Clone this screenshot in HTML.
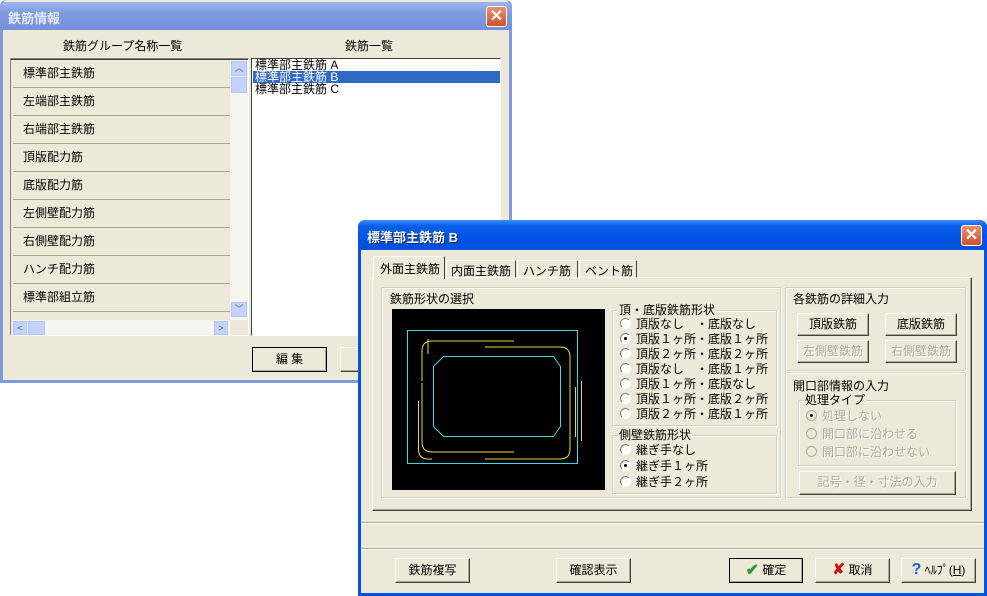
<!DOCTYPE html>
<html><head><meta charset="utf-8"><style>
*{box-sizing:border-box;margin:0;padding:0}
body{width:987px;height:596px;background:#fff;position:relative;overflow:hidden;font-family:"Liberation Sans","Noto Sans CJK JP",sans-serif;font-size:12px;color:#000}
.a{position:absolute}
.win{background:#ECE9D8}
.t1{background:linear-gradient(#9DB3EC,#7F9BE0 40%,#7590DA);}
.t2{background:linear-gradient(#3A8CFF,#0A5FE8 20%,#0054E3 60%,#0050D8);}
.tt{color:#fff;font-weight:bold;font-size:13px;white-space:nowrap}
.x{width:21px;height:21px;border:1px solid #fff;border-radius:3px;background:linear-gradient(#E88F72,#D2502C);color:#fff;font-weight:bold;font-size:16px;line-height:19px;text-align:center}
.row{position:absolute;left:2px;width:217px;height:28px;border-bottom:1px solid #A8A590;background:#ECE9D8;padding-left:10px;line-height:27px;font-size:12px}
.btn{position:absolute;background:#ECE9D8;border:1px solid;border-color:#fff #404040 #404040 #fff;box-shadow:inset -1px -1px #ACA899;text-align:center;white-space:nowrap}
.dis{color:#ACA899;text-shadow:1px 1px #fff}
.grp{position:absolute;border:1px solid #D0D0BF;box-shadow:1px 1px #fff inset,1px 1px #fff}
.gl{position:absolute;background:#ECE9D8;padding:0 1px;top:-8px;left:6px;line-height:14px}
.rd{position:absolute;white-space:nowrap;line-height:15px}
.rd i{display:inline-block;width:11px;height:11px;border-radius:50%;border:1px solid;border-color:#808080 #fff #fff #808080;background:#fff;vertical-align:-1px;margin-right:5px;position:relative}
.rd i.on:after{content:"";position:absolute;left:3px;top:3px;width:3px;height:3px;background:#000;border-radius:50%}
.rd.dis i{background:#ECE9D8}
</style></head><body>
<!-- background lines top -->
<div class="a" style="left:140px;top:0;width:1px;height:3px;background:#555"></div>
<div class="a" style="left:158px;top:0;width:1px;height:3px;background:#555"></div>
<div class="a" style="left:174px;top:0;width:1px;height:3px;background:#555"></div>
<div class="a" style="left:340px;top:0;width:1px;height:3px;background:#555"></div>
<div class="a" style="left:358px;top:0;width:1px;height:3px;background:#555"></div>
<div class="a" style="left:375px;top:0;width:1px;height:3px;background:#555"></div>

<!-- window 1 -->
<div class="a win" style="left:0;top:0;width:512px;height:383px;border:3px solid #7F9BE0;border-top:0;border-radius:6px 6px 0 0">
</div>
<div class="a t1" style="left:0;top:2px;width:512px;height:28px;border-radius:6px 6px 0 0"></div>
<div class="a tt" style="left:8px;top:8px;color:#E6ECFA">鉄筋情報</div>
<div class="a x" style="left:486px;top:6px;">✕</div>
<div class="a" style="left:63px;top:37px">鉄筋グループ名称一覧</div>
<div class="a" style="left:345px;top:37px">鉄筋一覧</div>
<div class="a" style="left:10px;top:58px;width:239px;height:278px;border:1px solid;border-color:#808080 #fff #fff #808080;background:#ECE9D8;overflow:hidden">
 <div style="position:absolute;left:0;top:0;width:237px;height:1px;background:#404040"></div>
 <div class="row" style="top:1px">標準部主鉄筋</div>
 <div class="row" style="top:29px">左端部主鉄筋</div>
 <div class="row" style="top:57px">右端部主鉄筋</div>
 <div class="row" style="top:85px">頂版配力筋</div>
 <div class="row" style="top:113px">底版配力筋</div>
 <div class="row" style="top:141px">左側壁配力筋</div>
 <div class="row" style="top:169px">右側壁配力筋</div>
 <div class="row" style="top:197px">ハンチ配力筋</div>
 <div class="row" style="top:225px">標準部組立筋</div>
 <div style="position:absolute;left:219px;top:1px;width:18px;height:260px;background:#F5F4EE"></div>
 <div style="position:absolute;left:220px;top:2px;width:16px;height:15px;background:#C3D3FD;border:1px solid #B0C4F8;color:#4D6185;font-size:9px;text-align:center;line-height:13px">︿</div>
 <div style="position:absolute;left:220px;top:18px;width:16px;height:16px;background:#C3D3FD;border:1px solid #B0C4F8"></div>
 <div style="position:absolute;left:220px;top:243px;width:16px;height:15px;background:#C3D3FD;border:1px solid #B0C4F8;color:#4D6185;font-size:9px;text-align:center;line-height:13px">﹀</div>
 <div style="position:absolute;left:1px;top:261px;width:218px;height:15px;background:#F5F4EE"></div>
 <div style="position:absolute;left:2px;top:262px;width:14px;height:14px;background:#C3D3FD;border:1px solid #B0C4F8;font-size:9px;line-height:12px;color:#4D6185;text-align:center">&lt;</div>
 <div style="position:absolute;left:17px;top:262px;width:17px;height:14px;background:#C3D3FD;border:1px solid #B0C4F8"></div>
 <div style="position:absolute;left:203px;top:262px;width:14px;height:14px;background:#C3D3FD;border:1px solid #B0C4F8;font-size:9px;line-height:12px;color:#4D6185;text-align:center">&gt;</div>
</div>
<div class="a" style="left:251px;top:58px;width:250px;height:278px;border:1px solid;border-color:#404040 #fff #fff #404040;background:#fff;font-family:'Liberation Sans','Noto Sans CJK JP',sans-serif;line-height:12px">
 <div style="position:absolute;left:3px;top:0">標準部主鉄筋 A</div>
 <div style="position:absolute;left:1px;top:12px;width:247px;height:12px;background:#316AC5;color:#fff;padding-left:2px">標準部主鉄筋 B</div>
 <div style="position:absolute;left:3px;top:24px">標準部主鉄筋 C</div>
</div>
<div class="btn" style="left:252px;top:347px;width:75px;height:25px;border:1px solid #000;line-height:22px">編 集</div>
<div class="btn" style="left:340px;top:347px;width:30px;height:25px"></div>

<!-- window 2 -->
<div class="a win" style="left:358px;top:220px;width:629px;height:376px;border:3px solid #0054E3;border-top:0;border-radius:7px 7px 0 0"></div>
<div class="a t2" style="left:358px;top:220px;width:629px;height:30px;border-radius:7px 7px 0 0"></div>
<div class="a tt" style="left:367px;top:227px;text-shadow:1px 1px #0A246A">標準部主鉄筋 B</div>
<div class="a x" style="left:961px;top:225px;">✕</div>

<!-- tabs -->
<div class="a" style="left:372px;top:277px;width:600px;height:234px;border:1px solid;border-color:#fff #404040 #404040 #fff;box-shadow:inset -1px -1px #ACA899"></div>
<div class="a" style="left:373px;top:256px;width:72px;height:23px;background:#ECE9D8;border:1px solid;border-color:#fff #404040 transparent #fff;border-bottom:0;padding:3px 0 0 6px">外面主鉄筋</div>
<div class="a" style="left:446px;top:260px;width:70px;height:18px;border:1px solid;border-color:#fff #404040 transparent #fff;padding:1px 0 0 4px">内面主鉄筋</div>
<div class="a" style="left:517px;top:260px;width:61px;height:18px;border:1px solid;border-color:#fff #404040 transparent #fff;padding:1px 0 0 5px">ハンチ筋</div>
<div class="a" style="left:579px;top:260px;width:58px;height:18px;border:1px solid;border-color:#fff #404040 transparent #fff;padding:1px 0 0 5px">ベント筋</div>

<div class="grp" style="left:381px;top:287px;width:400px;height:211px"></div>
<div class="a" style="left:390px;top:290px">鉄筋形状の選択</div>
<div class="a" style="left:392px;top:309px;width:213px;height:181px;background:#000">
<svg width="213" height="181" viewBox="0 0 213 181">
 <g fill="none" stroke="#3FD8E0" stroke-width="1">
  <rect x="15.5" y="21.5" width="170" height="133"/>
  <path d="M51.5 47.5 L161.5 47.5 L168.5 57.5 L168.5 117.5 L161.5 127.5 L51.5 127.5 L41.5 117.5 L41.5 57.5 Z"/>
 </g>
 <g fill="none" stroke="#E8D84A" stroke-width="1">
  <path d="M122 32 L40 32 Q30 32 30 42 L30 72"/>
  <path d="M93 38 L168 38 Q178 38 178 48 L178 140 Q178 150 168 150 L93 150"/>
  <path d="M122 143 L40 143 Q30 143 30 133 L30 74"/>
  <path d="M36 45 L36 30"/>
  <path d="M26.5 92 L26.5 140 Q26.5 150 36 150 L40 150"/>
  <path d="M189.5 72 L189.5 132"/>
  <path d="M183.5 78 L183.5 128"/>
 </g>
</svg>
</div>
<div class="grp" style="left:612px;top:310px;width:165px;height:116px"><span class="gl" style="left:5px">頂・底版鉄筋形状</span></div>
<div class="rd" style="left:620px;top:317px"><i></i>頂版なし　・底版なし</div>
<div class="rd" style="left:620px;top:332px"><i class="on"></i>頂版１ヶ所・底版１ヶ所</div>
<div class="rd" style="left:620px;top:347px"><i></i>頂版２ヶ所・底版２ヶ所</div>
<div class="rd" style="left:620px;top:362px"><i></i>頂版なし　・底版１ヶ所</div>
<div class="rd" style="left:620px;top:377px"><i></i>頂版１ヶ所・底版なし</div>
<div class="rd" style="left:620px;top:392px"><i></i>頂版１ヶ所・底版２ヶ所</div>
<div class="rd" style="left:620px;top:407px"><i></i>頂版２ヶ所・底版１ヶ所</div>
<div class="grp" style="left:612px;top:435px;width:165px;height:59px"><span class="gl" style="left:5px">側壁鉄筋形状</span></div>
<div class="rd" style="left:620px;top:443px"><i></i>継ぎ手なし</div>
<div class="rd" style="left:620px;top:459px"><i class="on"></i>継ぎ手１ヶ所</div>
<div class="rd" style="left:620px;top:475px"><i></i>継ぎ手２ヶ所</div>

<div class="grp" style="left:785px;top:287px;width:181px;height:84px"></div>
<div class="a" style="left:793px;top:290px">各鉄筋の詳細入力</div>
<div class="btn" style="left:797px;top:313px;width:72px;height:23px;line-height:20px">頂版鉄筋</div>
<div class="btn" style="left:885px;top:313px;width:72px;height:23px;line-height:20px">底版鉄筋</div>
<div class="btn dis" style="left:797px;top:340px;width:72px;height:23px;line-height:20px">左側壁鉄筋</div>
<div class="btn dis" style="left:885px;top:340px;width:72px;height:23px;line-height:20px">右側壁鉄筋</div>
<div class="grp" style="left:785px;top:372px;width:181px;height:126px"></div>
<div class="a" style="left:793px;top:377px">開口部情報の入力</div>
<div class="grp" style="left:798px;top:400px;width:158px;height:66px"><span class="gl" style="left:5px">処理タイプ</span></div>
<div class="rd dis" style="left:806px;top:409px"><i class="on" style="border-color:#ACA899"></i>処理しない</div>
<div class="rd dis" style="left:806px;top:427px"><i style="border-color:#ACA899"></i>開口部に沿わせる</div>
<div class="rd dis" style="left:806px;top:445px"><i style="border-color:#ACA899"></i>開口部に沿わせない</div>
<div class="btn dis" style="left:799px;top:471px;width:157px;height:24px;line-height:21px">記号・径・寸法の入力</div>

<!-- status -->
<div class="a" style="left:361px;top:522px;width:623px;height:27px;border-top:1px solid #ACA899;border-bottom:1px solid #ACA899;box-shadow:0 1px #fff, inset 0 1px #fff"></div>

<div class="btn" style="left:395px;top:558px;width:75px;height:25px;line-height:22px">鉄筋複写</div>
<div class="btn" style="left:556px;top:558px;width:75px;height:25px;line-height:22px">確認表示</div>
<div class="btn" style="left:729px;top:558px;width:74px;height:25px;border:1px solid #000;line-height:22px"><span style="color:#2F9A2F;font-weight:bold;font-size:16px;vertical-align:-1px">✔</span> 確定</div>
<div class="btn" style="left:815px;top:558px;width:75px;height:25px;line-height:22px"><span style="color:#D01010;font-weight:bold;font-size:15px">✘</span> 取消</div>
<div class="btn" style="left:901px;top:558px;width:75px;height:25px;line-height:22px"><span style="color:#1E5FC8;font-weight:bold;font-size:16px">?</span> ﾍﾙﾌﾟ(<u>H</u>)</div>
</body></html>
